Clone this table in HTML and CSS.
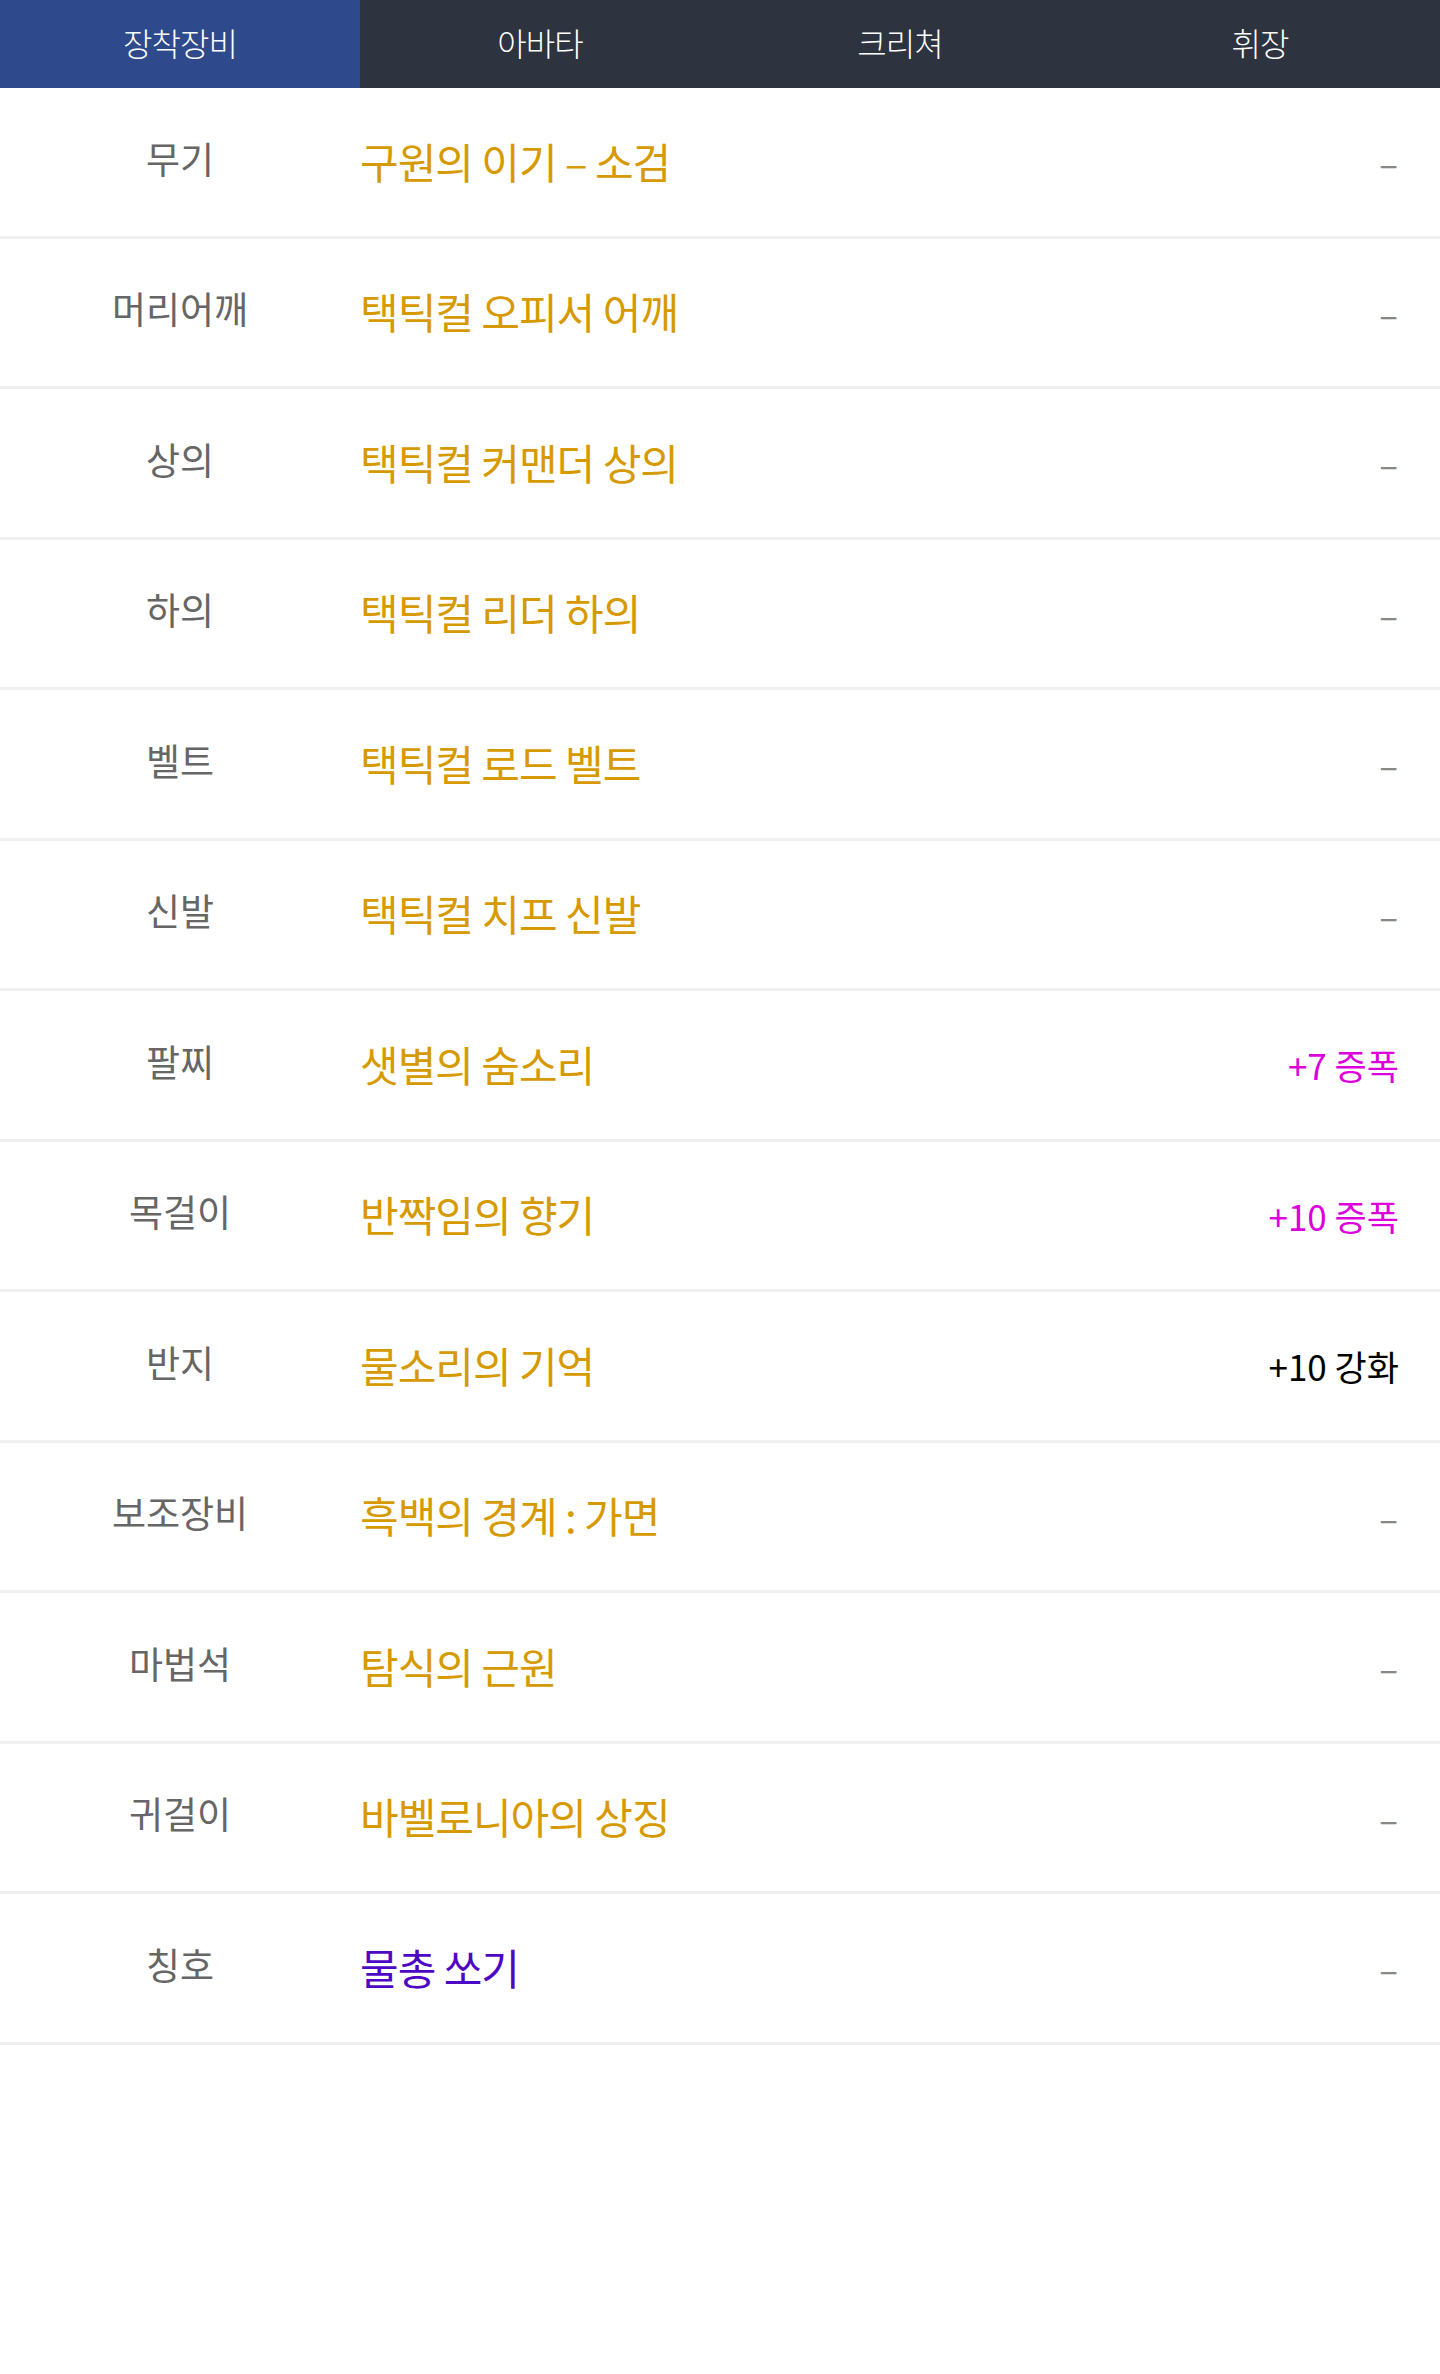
FILE: index.html
```html
<html>
    <head>
        <title>장착장비</title>
        <link rel="stylesheet" href="styles.css">
    </head>
    <body>
        <!-- Faner øverst -->
        <div class="faner">
            <div class="fane aktiv">장착장비</div>
            <div class="fane">아바타</div>
            <div class="fane">크리쳐</div>
            <div class="fane">휘장</div>
        </div>

        <!-- Liste over utstyr -->
        <div class="liste">
            <div class="rad"><div class="del">무기</div><div class="navn">구원의 이기 – 소검</div><div class="verdi">–</div></div>
            <div class="rad"><div class="del">머리어깨</div><div class="navn">택틱컬 오피서 어깨</div><div class="verdi">–</div></div>
            <div class="rad"><div class="del">상의</div><div class="navn">택틱컬 커맨더 상의</div><div class="verdi">–</div></div>
            <div class="rad"><div class="del">하의</div><div class="navn">택틱컬 리더 하의</div><div class="verdi">–</div></div>
            <div class="rad"><div class="del">벨트</div><div class="navn">택틱컬 로드 벨트</div><div class="verdi">–</div></div>
            <div class="rad"><div class="del">신발</div><div class="navn">택틱컬 치프 신발</div><div class="verdi">–</div></div>
            <div class="rad"><div class="del">팔찌</div><div class="navn">샛별의 숨소리</div><div class="verdi zoom">+7 증폭</div></div>
            <div class="rad"><div class="del">목걸이</div><div class="navn">반짝임의 향기</div><div class="verdi zoom">+10 증폭</div></div>
            <div class="rad"><div class="del">반지</div><div class="navn">물소리의 기억</div><div class="verdi sterk">+10 강화</div></div>
            <div class="rad"><div class="del">보조장비</div><div class="navn">흑백의 경계 : 가면</div><div class="verdi">–</div></div>
            <div class="rad"><div class="del">마법석</div><div class="navn">탐식의 근원</div><div class="verdi">–</div></div>
            <div class="rad"><div class="del">귀걸이</div><div class="navn">바벨로니아의 상징</div><div class="verdi">–</div></div>
            <div class="rad"><div class="del">칭호</div><div class="navn lilla">물총 쏘기</div><div class="verdi">–</div></div>
        </div>
    </body>
</html>
```

FILE: styles.css
```css
/* Hele siden */
body {
    margin: 0;
    background-color: #fff;
    font-family: "Noto Sans CJK KR", "Noto Sans", sans-serif;
}

/* Fanene øverst */
.faner {
    display: grid;
    grid-template-columns: repeat(4, 1fr);
    height: 88px;
    background-color: #2d333f;
}
.fane {
    display: flex;
    align-items: center;
    justify-content: center;
    color: #fff;
    font-size: 32px;
    font-weight: 300;
    letter-spacing: -1px;
    padding-bottom: 4px;
}
.fane.aktiv {
    background-color: #2e4a8c;
}

/* Radene */
.rad {
    display: flex;
    align-items: center;
    height: 147.5px;
    border-bottom: 3px solid #f0f0f0;
}
.del {
    width: 360px;
    text-align: center;
    font-size: 37px;
    color: #666;
    padding-bottom: 8px;
}
.navn {
    flex: 1;
    font-size: 42px;
    color: #d69a00;
    letter-spacing: -1px;
    padding-bottom: 3px;
}
.navn.lilla {
    color: #4e07c2;
}
.verdi {
    padding-right: 42px;
    font-size: 35px;
    color: #888;
}
.verdi.zoom {
    color: #dd00dd;
    padding-right: 41px;
}
.verdi.sterk {
    color: #000;
    padding-right: 41px;
}
```
